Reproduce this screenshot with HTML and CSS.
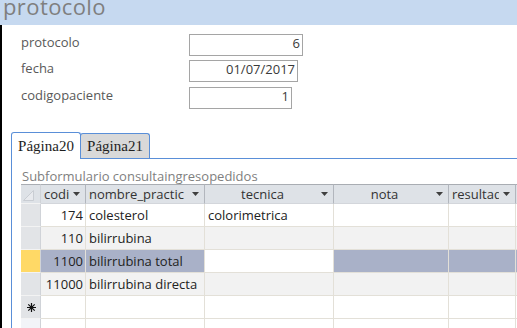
FILE: index.html
```html
<!doctype html>
<html>
  <head>
    <meta charset="utf-8" />
    <title>protocolo</title>
    <link rel="stylesheet" href="styles.css">
  </head>
  <body>
    <div class="titlebar">
      <h1 class="title">protocolo</h1>
    </div>
    <div class="detail">
      <div class="fields">
        <div class="field">
          <span class="field-label">protocolo</span>
          <div class="field-box box-protocolo">6</div>
        </div>
        <div class="field field-fecha">
          <span class="field-label">fecha</span>
          <div class="field-box box-fecha">01/07/2017</div>
        </div>
        <div class="field field-paciente">
          <span class="field-label">codigopaciente</span>
          <div class="field-box box-paciente">1</div>
        </div>
      </div>

      <div class="tabs">
        <div class="tab-strip">
          <div class="tab tab-active">Página20</div>
          <div class="tab tab-idle">Página21</div>
        </div>
        <div class="tab-panel">
          <div class="subform-label">Subformulario consultaingresopedidos</div>
          <div class="sheet">
            <div class="sheet-row sheet-head">
              <div class="cell col-sel">
                <svg class="corner" width="11" height="11" viewBox="0 0 11 11"><polygon points="0.5,10.5 10.5,0.5 10.5,10.5" fill="#e8eaee" stroke="#c9cdd3" /></svg>
              </div>
              <div class="cell col-codi"><span class="head-text">codi</span><svg class="arrow" width="7" height="4" viewBox="0 0 7 4"><polygon points="0,0 7,0 3.5,4" /></svg></div>
              <div class="cell col-nombre"><span class="head-text">nombre_practic</span><svg class="arrow" width="7" height="4" viewBox="0 0 7 4"><polygon points="0,0 7,0 3.5,4" /></svg></div>
              <div class="cell col-tecnica"><span class="head-text centered">tecnica</span><svg class="arrow" width="7" height="4" viewBox="0 0 7 4"><polygon points="0,0 7,0 3.5,4" /></svg></div>
              <div class="cell col-nota"><span class="head-text centered">nota</span><svg class="arrow" width="7" height="4" viewBox="0 0 7 4"><polygon points="0,0 7,0 3.5,4" /></svg></div>
              <div class="cell col-resultado"><span class="head-text">resultado</span><svg class="arrow" width="7" height="4" viewBox="0 0 7 4"><polygon points="0,0 7,0 3.5,4" /></svg></div>
              <div class="cell col-rest"></div>
            </div>

            <div class="sheet-row">
              <div class="cell col-sel"></div>
              <div class="cell col-codi num">174</div>
              <div class="cell col-nombre">colesterol</div>
              <div class="cell col-tecnica">colorimetrica</div>
              <div class="cell col-nota"></div>
              <div class="cell col-resultado"></div>
              <div class="cell col-rest"></div>
            </div>
            <div class="sheet-row alt">
              <div class="cell col-sel"></div>
              <div class="cell col-codi num">110</div>
              <div class="cell col-nombre">bilirrubina</div>
              <div class="cell col-tecnica"></div>
              <div class="cell col-nota"></div>
              <div class="cell col-resultado"></div>
              <div class="cell col-rest"></div>
            </div>
            <div class="sheet-row selected">
              <div class="cell col-sel"></div>
              <div class="cell col-codi num">1100</div>
              <div class="cell col-nombre">bilirrubina total</div>
              <div class="cell col-tecnica editing"></div>
              <div class="cell col-nota"></div>
              <div class="cell col-resultado"></div>
              <div class="cell col-rest"></div>
            </div>
            <div class="sheet-row alt">
              <div class="cell col-sel"></div>
              <div class="cell col-codi num">11000</div>
              <div class="cell col-nombre">bilirrubina directa</div>
              <div class="cell col-tecnica"></div>
              <div class="cell col-nota"></div>
              <div class="cell col-resultado"></div>
              <div class="cell col-rest"></div>
            </div>
            <div class="sheet-row">
              <div class="cell col-sel">
                <svg class="new-mark" width="9" height="9" viewBox="0 0 9 9"><path d="M4.5 0V9M0 4.5H9M1.3 1.3L7.7 7.7M7.7 1.3L1.3 7.7" stroke="#111" stroke-width="1.2" /></svg>
              </div>
              <div class="cell col-codi"></div>
              <div class="cell col-nombre"></div>
              <div class="cell col-tecnica"></div>
              <div class="cell col-nota"></div>
              <div class="cell col-resultado"></div>
              <div class="cell col-rest"></div>
            </div>
            <div class="sheet-row blank">
              <div class="cell col-sel"></div>
              <div class="cell col-codi"></div>
              <div class="cell col-nombre"></div>
              <div class="cell col-tecnica"></div>
              <div class="cell col-nota"></div>
              <div class="cell col-resultado"></div>
              <div class="cell col-rest"></div>
            </div>
          </div>
        </div>
      </div>
    </div>
  </body>
</html>
```

FILE: styles.css
```css
* {
  margin: 0;
  padding: 0;
  box-sizing: border-box;
}
html,
body {
  width: 517px;
  height: 328px;
  overflow: hidden;
  background: #ffffff;
  font-family: "Open Sans", "Noto Sans", sans-serif;
  font-size: 13px;
}
.titlebar {
  height: 25px;
  overflow: hidden;
  background: #c6d9f0;
}
.title {
  font-weight: 400;
  font-size: 22px;
  line-height: 22px;
  letter-spacing: 0.4px;
  color: #7f7f7f;
  margin-top: -5px;
  padding-left: 3px;
}
.detail {
  height: 303px;
  overflow: hidden;
  border-left: 2px solid #000000;
}
.fields {
  padding: 9px 0 0 19px;
}
.field {
  display: flex;
  align-items: flex-start;
}
.field-fecha {
  margin-top: 4px;
}
.field-paciente {
  margin-top: 5px;
}
.field-label {
  width: 168px;
  line-height: 16px;
  color: #595959;
}
.field-box {
  height: 22px;
  border: 1px solid #a5a5a5;
  line-height: 16px;
  padding-right: 2px;
  text-align: right;
  color: #3a3a3a;
}
.box-protocolo {
  width: 114px;
}
.box-fecha {
  width: 109px;
}
.box-paciente {
  width: 103px;
}
.tabs {
  margin: 23px 0 0 9px;
}
.tab-strip {
  display: flex;
  align-items: flex-end;
  height: 26px;
}
.tab {
  width: 70px;
  font-family: "Liberation Serif", "Times New Roman", serif;
  font-size: 15px;
  line-height: 18px;
  color: #1e1e1e;
  text-align: center;
  border: 1px solid #5a8fd8;
  border-bottom: none;
  border-radius: 3px 3px 0 0;
}
.tab-active {
  position: relative;
  z-index: 1;
  height: 27px;
  margin-bottom: -1px;
  padding-top: 4px;
  background: #ffffff;
}
.tab-idle {
  height: 25px;
  margin-left: -1px;
  padding-top: 3px;
  background: #d9d9d9;
}
.tab-panel {
  height: 180px;
  overflow: hidden;
  border-top: 1px solid #5a8fd8;
  border-left: 1px solid #5a8fd8;
  padding: 9px 0 0 9px;
}
.subform-label {
  padding-left: 1px;
  line-height: 16px;
  color: #808080;
}
.sheet {
  width: 535px;
  color: #222222;
}
.sheet-row {
  display: flex;
  height: 23px;
  line-height: 22px;
}
.sheet-row .cell {
  height: 23px;
  border-right: 1px solid #e3e0d8;
  border-bottom: 1px solid #e3e0d8;
  padding: 0 3px;
  white-space: nowrap;
  overflow: hidden;
}
.sheet-head {
  height: 20px;
}
.sheet-head .cell {
  display: flex;
  align-items: center;
  height: 20px;
  line-height: 18px;
  background: #dee2e7;
  border-top: 1px solid #a9adb3;
  border-right: 1px solid #b2b6bd;
  border-bottom: 1px solid #d3d6db;
  padding: 0 5px 0 3px;
  color: #333333;
}
.head-text {
  flex: 1;
  overflow: hidden;
  white-space: nowrap;
  margin-right: 4px;
}
.head-text.centered {
  text-align: center;
}
.arrow {
  flex: none;
  fill: #3f3f3f;
}
.corner {
  display: block;
  margin: 5px 0 0 2px;
}
.col-sel {
  width: 20px;
  flex: none;
  background: #e2e4e7;
}
.sheet-row .col-sel {
  padding: 0;
  border-right-color: #d0d3d8;
  border-bottom-color: #f3f3f3;
}
.sheet-head .col-sel {
  padding: 0;
  display: block;
}
.col-codi {
  width: 45px;
  flex: none;
}
.col-nombre {
  width: 119px;
  flex: none;
}
.col-tecnica {
  width: 129px;
  flex: none;
}
.col-nota {
  width: 115px;
  flex: none;
}
.col-resultado {
  width: 67px;
  flex: none;
}
.col-rest {
  width: 40px;
  flex: none;
}
.sheet-row .num {
  text-align: right;
  padding-right: 2px;
}
.alt .cell {
  background: #f2f2f2;
}
.alt .col-sel {
  background: #e2e4e7;
}
.selected .cell {
  background: #a9b1c8;
}
.selected .col-sel {
  background: #ffd966;
}
.selected .editing {
  background: #ffffff;
}
.new-mark {
  display: block;
  margin: 7px 0 0 6px;
}
.blank .col-sel {
  background: #f2f4f8;
}
```
